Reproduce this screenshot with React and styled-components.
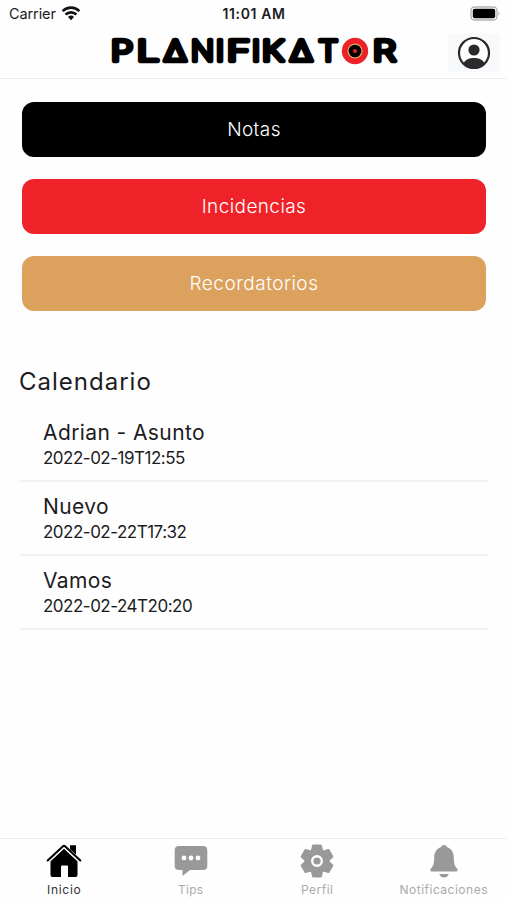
import React from 'react'
import styled, { createGlobalStyle } from 'styled-components'

const GlobalStyle = createGlobalStyle`
	* {
		box-sizing: border-box;
	}
	body {
		margin: 0;
		background: #fefefe;
		font-family: Inter, "Liberation Sans", sans-serif;
		font-optical-sizing: none;
		color: #1c1c1e;
	}
`

const actions = [
	{ title: 'Notas', color: '#000000', spacing: '0.4px' },
	{ title: 'Incidencias', color: '#ef2229', spacing: '0.4px' },
	{ title: 'Recordatorios', color: '#dda15e', spacing: '0.5px' },
]

const events = [
	{ title: 'Adrian - Asunto', date: '2022-02-19T12:55' },
	{ title: 'Nuevo', date: '2022-02-22T17:32' },
	{ title: 'Vamos', date: '2022-02-24T20:20' },
]

// x and width of every letter of the wordmark
const letters = [
	{ char: 'P', x: 111, width: 22 },
	{ char: 'L', x: 137, width: 22 },
	{ char: 'Δ', x: 164, width: 22.5 },
	{ char: 'N', x: 191, width: 23 },
	{ char: 'I', x: 216, width: 8 },
	{ char: 'F', x: 227, width: 23 },
	{ char: 'I', x: 252, width: 8 },
	{ char: 'K', x: 262, width: 22 },
	{ char: 'Δ', x: 290, width: 22.5 },
	{ char: 'T', x: 318.5, width: 19.5 },
	{ char: 'R', x: 373, width: 23 },
]

function Logo() {
	return (
		<LogoSvg viewBox="108 34 292 34" aria-label="Planifikator">
			{letters.map((item, id) => (
				<Letter
					key={id}
					x={item.x}
					y="61.2"
					textLength={item.width}
					lengthAdjust="spacingAndGlyphs"
				>
					{item.char}
				</Letter>
			))}
			<circle cx="355" cy="51" r="13.2" fill="#ed2228" />
			<circle cx="355" cy="51" r="7.6" fill="#dda15e" />
			<circle cx="355" cy="51" r="6.3" fill="#000" />
			<circle cx="355" cy="51" r="2" fill="#ed2228" />
		</LogoSvg>
	)
}

function WifiIcon() {
	return (
		<svg width="20" height="16" viewBox="0 0 20 16" fill="none" stroke="#111" strokeWidth="2.6">
			<path d="M1.6 6.1A12 12 0 0 1 18.4 6.1" />
			<path d="M4.6 9.5A7.8 7.8 0 0 1 15.4 9.5" />
			<path d="M7 11.9A4.3 4.3 0 0 1 13 11.9L10 15.2Z" fill="#111" stroke="none" />
		</svg>
	)
}

function BatteryIcon() {
	return (
		<svg width="31" height="15" viewBox="0 0 31 15">
			<rect x="1" y="1" width="26" height="13" rx="3.6" fill="#fefefe" stroke="#b3b3b3" strokeWidth="1.4" />
			<rect x="2.8" y="2.8" width="22.4" height="9.4" rx="2" fill="#000" />
			<path d="M28.5 5.5C30.1 6.1 30.1 8.9 28.5 9.5Z" fill="#b3b3b3" />
		</svg>
	)
}

function UserIcon() {
	return (
		<svg width="34" height="34" viewBox="0 0 34 34">
			<circle cx="17" cy="17" r="15" fill="#fefefe" stroke="#2a2a2c" strokeWidth="2.2" />
			<circle cx="17" cy="14" r="5.6" fill="#2a2a2c" />
			<path d="M6.5 27C9 23.3 12.7 22.1 17 22.1S25 23.3 27.5 27C24.5 30.5 21 32 17 32S9.5 30.5 6.5 27Z" fill="#2a2a2c" />
		</svg>
	)
}

function HomeIcon() {
	return (
		<TabSvg viewBox="0 0 36 36">
			<path d="M24 2.2H30V14L24 8Z" />
			<path d="M4.5 18L18 5.5L31.5 18V32Q31.5 34 29.5 34H22V23.5Q22 22.5 21 22.5H16Q15 22.5 15 23.5V34H6.5Q4.5 34 4.5 32Z" />
			<path d="M1.8 18L18 3.2L34.2 18" fill="none" stroke="#fefefe" strokeWidth="3.8" />
			<path d="M1.7 17.5L17 3.2Q18 2.4 19 3.2L34.3 17.5" fill="none" stroke="currentColor" strokeWidth="2.1" strokeLinecap="round" />
		</TabSvg>
	)
}

function TipsIcon() {
	return (
		<TabSvg viewBox="0 0 36 36">
			<path d="M6 3H30Q34.3 3 34.3 7.3V22.7Q34.3 27 30 27H17L9.5 33V27H6Q1.7 27 1.7 22.7V7.3Q1.7 3 6 3Z" />
			<circle cx="11" cy="15" r="2.4" fill="#fefefe" />
			<circle cx="18" cy="15" r="2.4" fill="#fefefe" />
			<circle cx="25" cy="15" r="2.4" fill="#fefefe" />
		</TabSvg>
	)
}

function GearIcon() {
	return (
		<TabSvg viewBox="0 0 36 36">
			<circle cx="18" cy="18" r="12.5" />
			{[0, 60, 120].map(angle => (
				<path
					key={angle}
					d="M14.3 1.5H21.7Q22.7 1.5 22.9 2.5L24.2 8V28L22.9 33.5Q22.7 34.5 21.7 34.5H14.3Q13.3 34.5 13.1 33.5L11.8 28V8L13.1 2.5Q13.3 1.5 14.3 1.5Z"
					transform={`rotate(${angle} 18 18)`}
				/>
			))}
			<circle cx="18" cy="18" r="4.8" stroke="#fefefe" strokeWidth="2.4" />
		</TabSvg>
	)
}

function BellIcon() {
	return (
		<TabSvg viewBox="0 0 36 36">
			<path d="M18 2Q20.4 2 20.9 4.1C25.6 5.7 27.8 9.8 27.8 14.5C27.8 20.5 28.5 22.5 30.8 25.2C32.5 27.2 31.5 28.6 29.5 28.6H6.5C4.5 28.6 3.5 27.2 5.2 25.2C7.5 22.5 8.2 20.5 8.2 14.5C8.2 9.8 10.4 5.7 15.1 4.1Q15.6 2 18 2Z" />
			<path d="M13.2 31H22.8C21.7 33.5 20.2 34.5 18 34.5S14.3 33.5 13.2 31Z" />
		</TabSvg>
	)
}

const tabs = [
	{ title: 'Inicio', icon: <HomeIcon />, active: true, spacing: '0.7px' },
	{ title: 'Tips', icon: <TipsIcon />, spacing: '0.3px' },
	{ title: 'Perfil', icon: <GearIcon />, spacing: '0.5px' },
	{ title: 'Notificaciones', icon: <BellIcon />, spacing: '0.5px' },
]

function App() {
	return (
		<Screen>
			<GlobalStyle />
			<StatusBar>
				<Carrier>
					Carrier
					<WifiIcon />
				</Carrier>
				<Time>11:01 AM</Time>
				<Battery>
					<BatteryIcon />
				</Battery>
			</StatusBar>
			<Header>
				<Logo />
				<UserButton aria-label="Perfil">
					<UserIcon />
				</UserButton>
			</Header>
			<Content>
				<Actions>
					{actions.map(item => (
						<ActionButton key={item.title} $color={item.color} $spacing={item.spacing}>
							{item.title}
						</ActionButton>
					))}
				</Actions>
				<Title>Calendario</Title>
				{events.map(item => (
					<Event key={item.date}>
						<EventTitle>{item.title}</EventTitle>
						<EventDate>{item.date}</EventDate>
					</Event>
				))}
			</Content>
			<TabBar>
				{tabs.map(item => (
					<Tab key={item.title} $active={item.active} $spacing={item.spacing}>
						{item.icon}
						<span>{item.title}</span>
					</Tab>
				))}
			</TabBar>
		</Screen>
	)
}

const Screen = styled.div`
	display: flex;
	flex-direction: column;
	height: 900px;
	width: 507px;
	overflow: hidden;
`
const StatusBar = styled.div`
	display: grid;
	grid-template-columns: 1fr auto 1fr;
	align-items: center;
	height: 27px;
	padding: 0 6px 0 9px;
	font-size: 14.5px;
`
const Carrier = styled.div`
	display: flex;
	align-items: center;
	column-gap: 5px;
	letter-spacing: -0.1px;
	svg {
		margin-top: -2px;
	}
`
const Time = styled.div`
	margin-left: -2px;
	font-size: 14px;
	font-weight: 600;
	letter-spacing: 0.6px;
`
const Battery = styled.div`
	display: flex;
	justify-content: flex-end;
	margin-top: -1px;
`
const Header = styled.header`
	display: flex;
	align-items: center;
	justify-content: space-between;
	height: 52px;
	padding: 0 7px 0 108px;
	border-bottom: 1px solid #ededed;
`
const LogoSvg = styled.svg`
	width: 292px;
	height: 34px;
	margin-top: -4px;
`
const Letter = styled.text`
	font-family: Inter, sans-serif;
	font-size: 28.5px;
	font-weight: 200;
	fill: #000;
	stroke: #000;
	stroke-width: 4.7px;
	stroke-linejoin: round;
`
const UserButton = styled.button`
	display: flex;
	align-items: center;
	justify-content: center;
	width: 52px;
	height: 39px;
	padding: 0;
	border: 0;
	border-radius: 4px;
	background: #f8f9fa;
`
const Content = styled.main`
	flex: 1;
	padding: 23px 19px 0 20px;
`
const Actions = styled.div`
	display: flex;
	flex-direction: column;
	row-gap: 22px;
	padding: 0 2px;
`
const ActionButton = styled.button`
	height: 55px;
	padding: 0;
	border: 0;
	border-radius: 12px;
	background: ${props => props.$color};
	color: #fff;
	font-family: inherit;
	font-optical-sizing: none;
	font-size: 19px;
	font-weight: 300;
	letter-spacing: ${props => props.$spacing};
`
const Title = styled.h2`
	margin: 55px 0 0 -1px;
	font-size: 24px;
	font-weight: 400;
	line-height: 32px;
	letter-spacing: 1px;
`
const Event = styled.div`
	height: 74px;
	padding: 11px 24px 0;
	border-bottom: 2px solid #f2f2f2;
	${Title} + & {
		height: 84px;
		padding-top: 21px;
	}
`
const EventTitle = styled.div`
	margin-left: -1px;
	font-size: 21px;
	line-height: 28px;
	letter-spacing: 0.4px;
`
const EventDate = styled.div`
	margin-left: -1px;
	font-size: 17px;
	line-height: 23px;
	letter-spacing: -0.5px;
`
const TabBar = styled.nav`
	display: grid;
	grid-template-columns: repeat(4, 1fr);
	height: 62px;
	padding-left: 1px;
	border-top: 1px solid #ededed;
`
const Tab = styled.div`
	display: flex;
	flex-direction: column;
	align-items: center;
	padding-top: 4px;
	color: ${props => (props.$active ? '#000' : '#999')};
	span {
		margin-top: 3px;
		color: ${props => (props.$active ? '#333' : '#aaa')};
		font-size: 12px;
		line-height: 16px;
		letter-spacing: ${props => props.$spacing};
	}
`
const TabSvg = styled.svg`
	width: 36px;
	height: 36px;
	fill: currentColor;
`

export default App
